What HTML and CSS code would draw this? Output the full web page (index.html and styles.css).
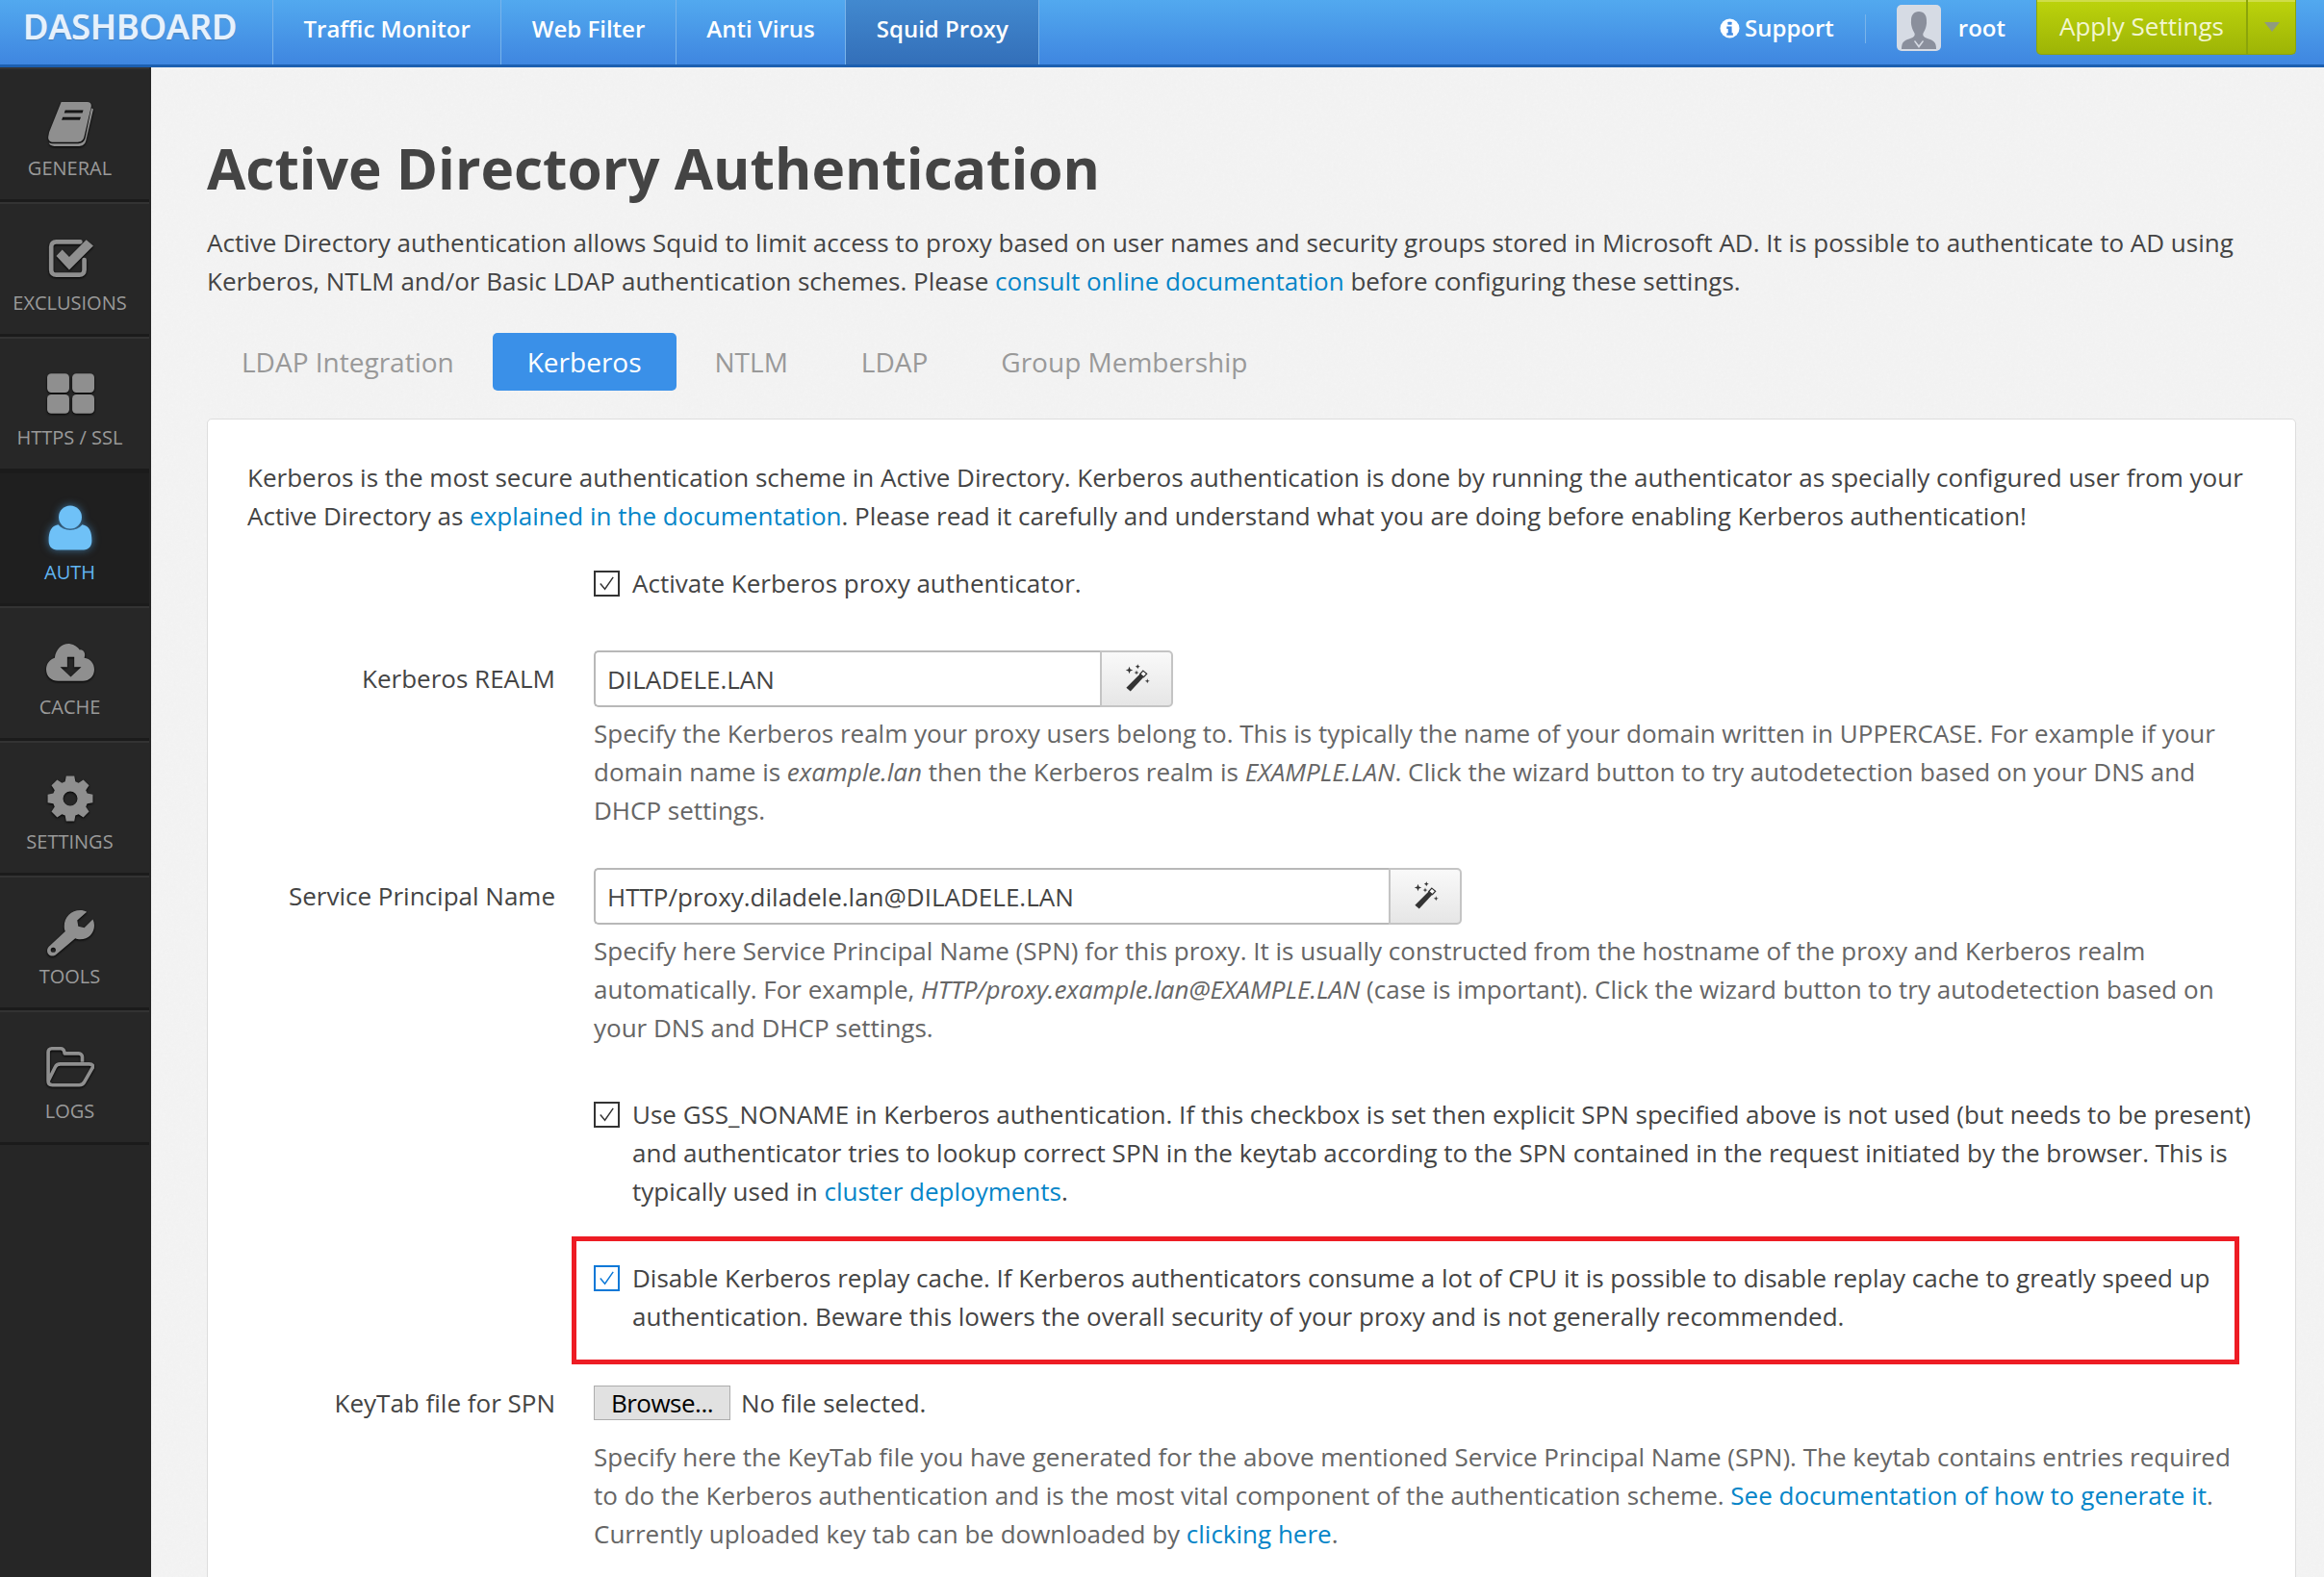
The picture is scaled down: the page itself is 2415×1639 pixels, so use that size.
FILE: index.html
```html
<!DOCTYPE html>
<html lang="en">
<head>
<meta charset="utf-8">
<title>Active Directory Authentication</title>
<link rel="stylesheet" href="styles.css">
</head>
<body>
<header class="topbar">
  <a class="brand">DASHBOARD</a>
  <nav class="topnav">
    <a class="topnav-item">Traffic Monitor</a>
    <a class="topnav-item">Web Filter</a>
    <a class="topnav-item">Anti Virus</a>
    <a class="topnav-item is-active">Squid Proxy</a>
  </nav>
  <div class="topright">
    <a class="support">
      <svg class="info-icon" viewBox="0 0 20 20"><circle cx="10" cy="10" r="9.500" fill="#fff"/><rect x="8" y="3.500" width="4" height="3" rx=".6" fill="#3f8ae2"/><path d="M7 8h5v6.500h1.200V17H7v-2.500h1.300V10.500H7z" fill="#3f8ae2"/></svg>
      Support
    </a>
    <span class="top-sep"></span>
    <span class="avatar">
      <svg viewBox="0 0 46 50"><path d="M23 7c5.500 0 8 4 8 9 0 2 .3 3-.4 6-.6 3-2.100 6-3.100 7.500-.6 1.500 0 3.500 2 4.500 5 2 10 3 11 7.500.4 1.500.5 3 .5 4.500H5c0-1.500.1-3 .5-4.500 1-4.500 6-5.500 11-7.500 2-1 2.600-3 2-4.500-1-1.500-2.500-4.500-3.100-7.500-.7-3-.4-4-.4-6 0-5 2.500-9 8-9z" fill="#8a8f9c"/><path d="M19 37l4 5 4-5 1 1-5 7-5-7z" fill="#d6dbe4"/></svg>
    </span>
    <span class="username">root</span>
    <div class="apply">
      <span class="apply-main">Apply Settings</span>
      <span class="apply-caret"></span>
    </div>
  </div>
</header>

<div class="shell">
  <aside class="sidebar">
    <a class="side-item">
      <svg class="side-icon" viewBox="0 0 48 48"><path fill-rule="evenodd" d="M15 2h26c3 0 4.500 2 3.800 5l-7 30c-.7 3-3.300 5-6.300 5H7c-3.500 0-5.500-2.500-4.800-6L3 32zM19 10l-1 3h18l1-3zM16.500 17l-1 3h18l1-3z" fill="#8f8f8f"/><path d="M47 9l-7.500 32c-.8 3-3.500 5-6.500 5H8c-3 0-5-1.500-5.300-3.500 1 .7 2.500 1 4.300 1h25c3.500 0 6-2 7-5.500L45 8z" fill="#8f8f8f"/></svg>
      <span>GENERAL</span>
    </a>
    <a class="side-item">
      <svg class="side-icon" viewBox="0 0 48 48"><path d="M38 25v10c0 3-2 5-5 5H10c-3 0-5-2-5-5V12c0-3 2-5 5-5h24" fill="none" stroke="#8f8f8f" stroke-width="4.500" stroke-linecap="round"/><path d="M10 21l6-6 7 7L40 5l7 6-24 24z" fill="#8f8f8f"/></svg>
      <span>EXCLUSIONS</span>
    </a>
    <a class="side-item">
      <svg class="side-icon" viewBox="0 0 48 48"><rect x="1" y="4" width="22" height="19" rx="4" fill="#8f8f8f"/><rect x="26" y="4" width="22" height="19" rx="4" fill="#8f8f8f"/><rect x="1" y="25" width="22" height="19" rx="4" fill="#8f8f8f"/><rect x="26" y="25" width="22" height="19" rx="4" fill="#8f8f8f"/></svg>
      <span>HTTPS / SSL</span>
    </a>
    <a class="side-item is-active">
      <svg class="side-icon" viewBox="0 0 48 48"><circle cx="24" cy="13" r="11.500" fill="#6fc1f7"/><path d="M12 20.500C15 24 19 26 24 26s9-2 12-5.500c7 1 9.500 7 9.500 16 0 6-3.500 9-8 9h-27c-4.500 0-8-3-8-9 0-9 2.500-15 9.500-16z" fill="#6fc1f7"/></svg>
      <span>AUTH</span>
    </a>
    <a class="side-item">
      <svg class="side-icon" viewBox="0 0 48 48"><path fill-rule="evenodd" d="M38 19c6 .8 10 5.500 10 11.500 0 7-5 11.500-11.500 11.500H12C5 42 0 37.500 0 30.500c0-5.500 3.500-10 8.500-11.500C9.500 10 16.500 4 24 5c4 .5 7.500 3 9.500 6 3-1 6.500 3 4.500 8zM21 18v10h-7l10.500 10L35 28h-7V18z" fill="#8f8f8f"/></svg>
      <span>CACHE</span>
    </a>
    <a class="side-item">
      <svg class="side-icon" viewBox="0 0 48 48"><path fill-rule="evenodd" d="M19.500 2h9l1.200 6.200 3.500 1.500 5.300-3.500 6.300 6.300-3.500 5.300 1.500 3.500 6.200 1.200v9l-6.200 1.200-1.500 3.500 3.500 5.300-6.300 6.300-5.300-3.500-3.500 1.500L28.500 52h-9l-1.200-6.200-3.500-1.500-5.300 3.500-6.300-6.300 3.500-5.300-1.500-3.500L-1 31.500v-9l6.200-1.200 1.500-3.500-3.500-5.300 6.300-6.300 5.300 3.500 3.500-1.500zM24 19a8 8 0 1 0 0 16 8 8 0 0 0 0-16z" transform="translate(2.400 .6) scale(.9)" fill="#8f8f8f"/></svg>
      <span>SETTINGS</span>
    </a>
    <a class="side-item">
      <svg class="side-icon" viewBox="0 0 48 48"><path fill-rule="evenodd" d="M34 2c2.500 0 4.500.5 6.500 1.500L31 12l1 6 6 1.500 8.500-8.500c1 2 1.500 4 1.500 6 0 8-6 14-14 14-2 0-3.500-.3-5-1L10 46c-2.500 2-5.500 2-7.500 0s-2-5 0-7.500L19 23c-.7-1.500-1-3-1-5 0-9 7-16 16-16zM7 39a2.500 2.500 0 1 0 0 5 2.500 2.500 0 0 0 0-5z" fill="#8f8f8f"/></svg>
      <span>TOOLS</span>
    </a>
    <a class="side-item">
      <svg class="side-icon" viewBox="0 0 48 48"><path d="M2 38V9c0-2 1.500-3.500 3.500-3.500h9c2 0 3 1 3.500 3l.5 2h14c2 0 3.500 1.500 3.500 3.500v5M2 38l7-14c1-2 2.500-3 5-3h29c3 0 4.500 2 3 4l-8 14c-1 2-2.500 3-5 3H6c-2.500 0-4-1.500-4-4z" fill="none" stroke="#8f8f8f" stroke-width="3.500" stroke-linejoin="round"/></svg>
      <span>LOGS</span>
    </a>
  </aside>

  <main class="content">
    <h1 class="page-title">Active Directory Authentication</h1>
    <p class="intro">Active Directory authentication allows Squid to limit access to proxy based on user names and security groups stored in Microsoft AD. It is possible to authenticate to AD using Kerberos, NTLM and/or Basic LDAP authentication schemes. Please <a class="link">consult online documentation</a> before configuring these settings.</p>

    <ul class="tabs">
      <li class="tab">LDAP Integration</li>
      <li class="tab is-active">Kerberos</li>
      <li class="tab">NTLM</li>
      <li class="tab">LDAP</li>
      <li class="tab">Group Membership</li>
    </ul>

    <section class="panel">
      <p class="panel-lead">Kerberos is the most secure authentication scheme in Active Directory. Kerberos authentication is done by running the authenticator as specially configured user from your Active Directory as <a class="link">explained in the documentation</a>. Please read it carefully and understand what you are doing before enabling Kerberos authentication!</p>

      <div class="form-row row-activate">
        <div class="field">
          <div class="check-line">
            <span class="checkbox"><svg viewBox="0 0 24 24"><path d="M5 12l5 6 9-13" fill="none" stroke="#333" stroke-width="1.500"/></svg></span>
            <span>Activate Kerberos proxy authenticator.</span>
          </div>
        </div>
      </div>

      <div class="form-row row-realm">
        <label class="form-label">Kerberos REALM</label>
        <div class="field">
          <div class="input-group group-realm">
            <span class="input">DILADELE.LAN</span>
            <span class="addon"><svg class="wand" viewBox="0 0 24 24"><path d="M17.500 6.500l3 2.500L7 23.500 3.500 20.500z" fill="#333"/><path d="M17.500 6.500l3 2.500-2.500 2.700-3-2.500z" fill="#fff" stroke="#333"/><path d="M6 3l.8 2.200L9 6 6.800 6.800 6 9l-.8-2.200L3 6l2.200-.8zM13 1l.6 1.400L15 3l-1.400.6L13 5l-.6-1.400L11 3l1.400-.6zM21 13l.5 1.500L23 15l-1.500.5L21 17l-.5-1.500L19 15l1.500-.5zM12 6l.5 1.500L14 8l-1.500.5L12 10l-.5-1.500L10 8l1.500-.5z" fill="#333"/></svg></span>
          </div>
          <p class="help">Specify the Kerberos realm your proxy users belong to. This is typically the name of your domain written in UPPERCASE. For example if your domain name is <em>example.lan</em> then the Kerberos realm is <em>EXAMPLE.LAN</em>. Click the wizard button to try autodetection based on your DNS and DHCP settings.</p>
        </div>
      </div>

      <div class="form-row row-spn">
        <label class="form-label">Service Principal Name</label>
        <div class="field">
          <div class="input-group group-spn">
            <span class="input">HTTP/proxy.diladele.lan@DILADELE.LAN</span>
            <span class="addon"><svg class="wand" viewBox="0 0 24 24"><path d="M17.500 6.500l3 2.500L7 23.500 3.500 20.500z" fill="#333"/><path d="M17.500 6.500l3 2.500-2.500 2.700-3-2.500z" fill="#fff" stroke="#333"/><path d="M6 3l.8 2.200L9 6 6.800 6.800 6 9l-.8-2.200L3 6l2.200-.8zM13 1l.6 1.400L15 3l-1.400.6L13 5l-.6-1.400L11 3l1.400-.6zM21 13l.5 1.500L23 15l-1.500.5L21 17l-.5-1.500L19 15l1.500-.5zM12 6l.5 1.500L14 8l-1.500.5L12 10l-.5-1.500L10 8l1.500-.5z" fill="#333"/></svg></span>
          </div>
          <p class="help">Specify here Service Principal Name (SPN) for this proxy. It is usually constructed from the hostname of the proxy and Kerberos realm automatically. For example, <em>HTTP/proxy.example.lan@EXAMPLE.LAN</em> (case is important). Click the wizard button to try autodetection based on your DNS and DHCP settings.</p>
        </div>
      </div>

      <div class="form-row row-gss">
        <div class="field">
          <div class="check-line">
            <span class="checkbox"><svg viewBox="0 0 24 24"><path d="M5 12l5 6 9-13" fill="none" stroke="#333" stroke-width="1.500"/></svg></span>
            <span>Use GSS_NONAME in Kerberos authentication. If this checkbox is set then explicit SPN specified above is not used (but needs to be present) and authenticator tries to lookup correct SPN in the keytab according to the SPN contained in the request initiated by the browser. This is typically used in <a class="link">cluster deployments</a>.</span>
          </div>
        </div>
      </div>

      <div class="highlight">
        <div class="check-line">
          <span class="checkbox is-focus"><svg viewBox="0 0 24 24"><path d="M5 12l5 6 9-13" fill="none" stroke="#0a78d7" stroke-width="1.500"/></svg></span>
          <span>Disable Kerberos replay cache. If Kerberos authenticators consume a lot of CPU it is possible to disable replay cache to greatly speed up authentication. Beware this lowers the overall security of your proxy and is not generally recommended.</span>
        </div>
      </div>

      <div class="form-row row-keytab">
        <label class="form-label">KeyTab file for SPN</label>
        <div class="field">
          <div class="file-line">
            <button class="browse" type="button">Browse...</button>
            <span>No file selected.</span>
          </div>
          <p class="help">Specify here the KeyTab file you have generated for the above mentioned Service Principal Name (SPN). The keytab contains entries required to do the Kerberos authentication and is the most vital component of the authentication scheme. <a class="link">See documentation of how to generate it</a>. Currently uploaded key tab can be downloaded by <a class="link">clicking here</a>.</p>
        </div>
      </div>
    </section>
  </main>
</div>
</body>
</html>
```

FILE: styles.css
```css
* { box-sizing: border-box; }
html, body { margin: 0; height: 1639px; overflow: hidden; }
body {
  font-family: "Open Sans", sans-serif;
  font-size: 26px;
  line-height: 40px;
  color: #444;
  background: #f5f5f5;
}
p { margin: 0; }
.link { color: #0585c8; }

/* top bar */
.topbar {
  height: 70px;
  display: flex;
  align-items: stretch;
  color: #fff;
  background: linear-gradient(#52a9ef, #3f86e0);
  border-bottom: 3px solid #1c5fb0;
}
.brand {
  width: 283px;
  padding-left: 24px;
  font-size: 36px;
  font-weight: 600;
  line-height: 56px;
  color: #e6f1fc;
  text-shadow: 0 0 1px #fff, 0 1px 1px rgba(0,0,0,.25);
}
.topnav { display: flex; border-left: 1px solid #7ab4ea; }
.topnav-item {
  display: flex;
  align-items: center;
  height: 67px;
  padding: 0 31.500px 8px;
  font-size: 24px;
  font-weight: 600;
  border-right: 1px solid #7ab4ea;
}
.topnav-item.is-active { background: linear-gradient(#4289cf, #336fb9); }
.topright {
  margin-left: auto;
  padding-right: 29px;
  display: flex;
  align-items: flex-start;
}
.support {
  display: flex;
  align-items: center;
  gap: 5px;
  height: 58px;
  font-size: 24px;
  font-weight: 600;
}
.info-icon { width: 21px; height: 21px; }
.top-sep {
  width: 1px;
  height: 30px;
  margin: 15px 32px 0;
  background: #7ab4ea;
}
.avatar {
  width: 46px;
  height: 48px;
  margin-top: 5px;
  border-radius: 5px;
  background: #d6dbe4;
  overflow: hidden;
}
.avatar svg { display: block; width: 46px; height: 50px; }
.username {
  margin: 0 32px 0 18px;
  height: 58px;
  font-size: 24px;
  font-weight: 600;
  line-height: 58px;
}
.apply {
  width: 270px;
  height: 57px;
  display: flex;
  border: 1px solid #8ba40a;
  border-top: 0;
  border-radius: 0 0 5px 5px;
  background: linear-gradient(#bcd30c, #9db406);
  box-shadow: inset 0 2px 0 #cfdd4a;
}
.apply-main {
  width: 219px;
  text-align: center;
  font-size: 26px;
  line-height: 55px;
  color: #f2f6d0;
  border-right: 2px solid #8ba40a;
}
.apply-caret {
  width: 0;
  height: 0;
  margin: 23px 0 0 17px;
  border: 8px solid transparent;
  border-top: 10px solid #8f9b7f;
  border-bottom: 0;
}

/* layout */
.shell {
  display: flex;
  height: 1569px;
  background-image: url("data:image/svg+xml,%3Csvg xmlns='http://www.w3.org/2000/svg' width='256' height='256'%3E%3Cfilter id='n'%3E%3CfeTurbulence type='fractalNoise' baseFrequency='.35' numOctaves='2' stitchTiles='stitch'/%3E%3CfeColorMatrix values='0 0 0 0 .5 0 0 0 0 .5 0 0 0 0 .5 0 0 0 .09 0'/%3E%3C/filter%3E%3Crect width='256' height='256' filter='url(%23n)'/%3E%3C/svg%3E");
}
.sidebar {
  width: 157px;
  flex: none;
  padding-right: 2px;
  background: #262626;
}
.side-item {
  height: 140px;
  padding-top: 32px;
  padding-right: 10px;
  display: flex;
  flex-direction: column;
  align-items: center;
  gap: 8px;
  font-size: 20px;
  line-height: 26px;
  color: #9a9a9a;
  background: #272727;
  border-top: 2px solid #333;
  border-bottom: 3px solid #1b1b1b;
}
.side-item.is-active { color: #61b5f2; background: #1f1f1f; border-top-color: #1b1b1b; }
.side-icon { width: 50px; height: 50px; flex: none; filter: drop-shadow(0 1px 1px #000); }
.side-item.is-active .side-icon { filter: drop-shadow(0 0 4px rgba(80,170,240,.6)); }

.content { flex: 1; min-width: 0; padding: 62px 29px 0 58px; }
.page-title {
  margin: 0 0 16px;
  font-size: 58.500px;
  line-height: 84px;
  font-weight: 700;
  color: #444;
}
.intro { color: #444; }

/* tabs */
.tabs {
  list-style: none;
  display: flex;
  gap: 4px;
  margin: 34px 0 29px;
  padding: 0;
}
.tab {
  height: 60px;
  padding: 0 36px;
  font-size: 28px;
  line-height: 60px;
  color: #999;
  border-radius: 5px;
}
.tab.is-active { background: #3a90e8; color: #fff; }

/* panel */
.panel {
  padding: 40px 41px 0;
  height: 1300px;
  background: #fff;
  border: 1px solid #ddd;
  border-radius: 5px;
}
.form-row {
  display: grid;
  grid-template-columns: 360px 1fr;
  column-gap: 0;
}
.form-label {
  grid-column: 1;
  padding-right: 40px;
  text-align: right;
  line-height: 59px;
  font-weight: 400;
}
.field { grid-column: 2; min-width: 0; }
.row-activate { margin-top: 30px; }
.row-realm { margin-top: 50px; }
.row-spn { margin-top: 40px; }
.row-gss { margin-top: 50px; }
.row-keytab { margin-top: 20px; }

.check-line { display: flex; gap: 13px; }
.checkbox {
  flex: none;
  width: 27px;
  height: 27px;
  margin-top: 7px;
  border: 2px solid #333;
  background: #fff;
}
.checkbox svg { display: block; width: 23px; height: 23px; }
.checkbox.is-focus { border-color: #0a78d7; }

.input-group { display: flex; height: 59px; }
.group-realm { width: 602px; }
.group-spn { width: 902px; }
.input {
  flex: 1;
  padding-left: 12px;
  line-height: 56px;
  font-size: 26px;
  color: #444;
  background: #fff;
  border: 2px solid #b8b8b8;
  border-right: 0;
  border-radius: 5px 0 0 5px;
}
.addon {
  width: 76px;
  display: flex;
  align-items: center;
  justify-content: center;
  background: linear-gradient(#f9f9f9, #e6e6e6);
  border: 2px solid #c4c4c4;
  border-radius: 0 5px 5px 0;
}
.wand { width: 30px; height: 30px; margin-top: -4px; }
.help { margin-top: 7px; color: #666; }

.highlight {
  margin: 27px 0 0 337px;
  width: 1733px;
  height: 133px;
  padding: 18px 20px 0 18px;
  border: 5px solid #ed1c24;
}

.file-line {
  display: flex;
  align-items: center;
  gap: 11px;
  height: 40px;
  padding-top: 0;
}
.browse {
  width: 142px;
  height: 36px;
  padding: 0;
  font: 26px/30px "Open Sans", sans-serif;
  color: #000;
  background: #e1e1e1;
  border: 1px solid #adadad;
  letter-spacing: -.5px;
}
.row-keytab .help { margin-top: 16px; }
.row-keytab .form-label { line-height: 40px; }
```
